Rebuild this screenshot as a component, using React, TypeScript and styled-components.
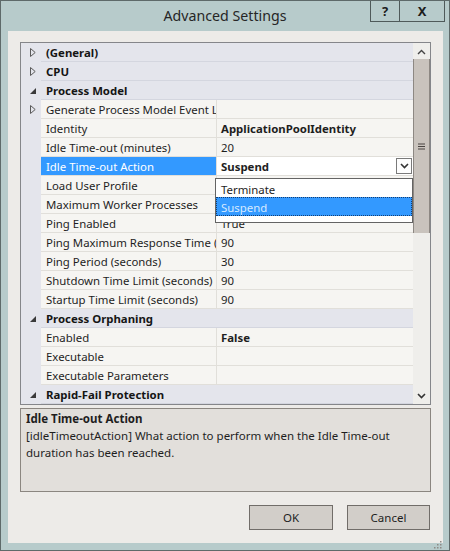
import React from "react";
import styled, { createGlobalStyle } from "styled-components";

const FONT = `"Noto Sans", "Open Sans", sans-serif`;

const GlobalStyle = createGlobalStyle`
  html, body { margin: 0; padding: 0; background: #b7cbcb; }
  body { font-family: ${FONT}; }
  * { box-sizing: border-box; }
`;

const Window = styled.div`
  width: 450px;
  height: 551px;
  border: 1px solid #5e6a6a;
  background: #b7cbcb;
  display: flex;
  flex-direction: column;
  font-family: ${FONT};
  color: #1e1e1e;
`;

const TitleBar = styled.div`
  height: 30px;
  flex: none;
  display: grid;
  grid-template-columns: 1fr auto 1fr;
`;

const Title = styled.div`
  grid-column: 2;
  font-size: 14.2px;
  line-height: 30px;
  color: #262626;
`;

const CaptionButtons = styled.div`
  grid-column: 3;
  justify-self: end;
  align-self: start;
  display: flex;
  margin-right: 4px;
`;

const CaptionButton = styled.div<{ $w: number }>`
  width: ${(p) => p.$w}px;
  height: 21px;
  border: 1px solid #4f5a5a;
  border-top: none;
  margin-left: -1px;
  display: flex;
  align-items: center;
  justify-content: center;
  font-weight: 700;
  font-size: 13px;
  color: #1c1c1c;
`;

const Client = styled.div`
  flex: 1;
  margin: 0 6px 7px 7px;
  background: #edebe8;
  display: flex;
  flex-direction: column;
  padding: 11px 12px 0 12px;
  position: relative;
`;

const Grid = styled.div`
  height: 363px;
  flex: none;
  border: 1px solid #85868a;
  display: flex;
  background: #f6f5f2;
`;

const Rows = styled.div`
  flex: 1;
  position: relative;
  display: flex;
  flex-direction: column;
  font-size: 11.4px;
`;

const Row = styled.div`
  display: grid;
  grid-template-columns: 20px 176px 1fr;
  height: 19px;
  flex: none;
`;

const Gutter = styled.div`
  background: #e4e5ec;
  display: flex;
  align-items: center;
  padding-left: 9px;
`;

const CatLabel = styled.div`
  grid-column: span 2;
  background: #e4e5ec;
  border-bottom: 1px solid #d4d6df;
  font-weight: 700;
  padding: 2px 0 0 5px;
  line-height: 16px;
  color: #151515;
`;

const NameCell = styled.div<{ $selected?: boolean }>`
  border-bottom: 1px solid #e1dfda;
  border-right: 1px solid #e1dfda;
  padding: 2px 0 0 5px;
  line-height: 16px;
  white-space: nowrap;
  overflow: hidden;
  background: ${(p) => (p.$selected ? "#3399ff" : "transparent")};
  color: ${(p) => (p.$selected ? "#ffffff" : "#1e1e1e")};
`;

const ValueCell = styled.div<{ $bold?: boolean; $editing?: boolean }>`
  border-bottom: 1px solid #e1dfda;
  padding-left: 4px;
  white-space: nowrap;
  overflow: hidden;
  font-weight: ${(p) => (p.$bold ? 700 : 400)};
  background: ${(p) => (p.$editing ? "#ffffff" : "transparent")};
  display: flex;
  align-items: center;
  justify-content: space-between;
`;

const ValueText = styled.span`
  padding-top: 2px;
  line-height: 16px;
`;

const DropButton = styled.div`
  width: 16px;
  height: 16px;
  margin-right: 1px;
  border: 1px solid #7a7a7a;
  background: #fdfdfd;
  display: flex;
  align-items: center;
  justify-content: center;
`;

const Popup = styled.div`
  position: absolute;
  left: 194px;
  top: 135px;
  width: 198px;
  height: 45px;
  border: 1px solid #646464;
  background: #ffffff;
  z-index: 2;
  display: flex;
  flex-direction: column;
`;

const PopupItem = styled.div<{ $active?: boolean }>`
  height: ${(p) => (p.$active ? 19 : 18)}px;
  line-height: 17px;
  padding: 1px 0 0 4px;
  background: ${(p) => (p.$active ? "#3399ff" : "transparent")};
  color: ${(p) => (p.$active ? "#d6eaff" : "#1e1e1e")};
  border: 1px dotted ${(p) => (p.$active ? "#123f75" : "transparent")};
`;

const ScrollBar = styled.div`
  width: 17px;
  flex: none;
  display: flex;
  flex-direction: column;
  background: #efeeeb;
  padding: 1px 0;
`;

const ArrowButton = styled.div`
  height: 15px;
  flex: none;
  display: flex;
  align-items: center;
  justify-content: center;
`;

const Thumb = styled.div`
  height: 174px;
  flex: none;
  background: #c9c3bd;
  border-left: 1px solid #8d8883;
  border-right: 1px solid #8d8883;
  display: flex;
  align-items: center;
  justify-content: center;
`;

const Track = styled.div`
  flex: 1;
`;

const Description = styled.div`
  margin-top: 3px;
  height: 84px;
  flex: none;
  border: 1px solid #8b8680;
  background: #e2dfdb;
  padding: 1px 5px;
  font-size: 11.5px;
  line-height: 17px;
  color: #1e1e1e;
`;

const DescTitle = styled.div`
  font-weight: 700;
`;

const ButtonRow = styled.div`
  display: flex;
  justify-content: flex-end;
  gap: 14px;
  margin-top: 13px;
  padding-right: 1px;
`;

const DialogButton = styled.div<{ $w: number }>`
  width: ${(p) => p.$w}px;
  height: 25px;
  background: #d2cec9;
  border: 1px solid #716d69;
  display: flex;
  align-items: center;
  justify-content: center;
  font-size: 11.5px;
  color: #1e1e1e;
`;

const Grip = styled.div`
  position: absolute;
  right: 1px;
  bottom: 1px;
  width: 10px;
  height: 10px;
`;

type Item =
  | { kind: "cat"; label: string; expanded: boolean }
  | {
      kind: "prop";
      name: string;
      value?: string;
      bold?: boolean;
      expandable?: boolean;
      selected?: boolean;
    };

const items: Item[] = [
  { kind: "cat", label: "(General)", expanded: false },
  { kind: "cat", label: "CPU", expanded: false },
  { kind: "cat", label: "Process Model", expanded: true },
  { kind: "prop", name: "Generate Process Model Event Log Entry", expandable: true },
  { kind: "prop", name: "Identity", value: "ApplicationPoolIdentity", bold: true },
  { kind: "prop", name: "Idle Time-out (minutes)", value: "20" },
  { kind: "prop", name: "Idle Time-out Action", value: "Suspend", bold: true, selected: true },
  { kind: "prop", name: "Load User Profile", value: "True" },
  { kind: "prop", name: "Maximum Worker Processes", value: "1" },
  { kind: "prop", name: "Ping Enabled", value: "True" },
  { kind: "prop", name: "Ping Maximum Response Time (seconds)", value: "90" },
  { kind: "prop", name: "Ping Period (seconds)", value: "30" },
  { kind: "prop", name: "Shutdown Time Limit (seconds)", value: "90" },
  { kind: "prop", name: "Startup Time Limit (seconds)", value: "90" },
  { kind: "cat", label: "Process Orphaning", expanded: true },
  { kind: "prop", name: "Enabled", value: "False", bold: true },
  { kind: "prop", name: "Executable", value: "" },
  { kind: "prop", name: "Executable Parameters", value: "" },
  { kind: "cat", label: "Rapid-Fail Protection", expanded: true },
];

const Collapsed = () => (
  <svg width="6" height="9" viewBox="0 0 6 9">
    <path d="M0.5 0.5 L5.2 4.5 L0.5 8.5 Z" fill="none" stroke="#5a5a5a" strokeWidth="1" />
  </svg>
);

const Expanded = () => (
  <svg width="6" height="6" viewBox="0 0 6 6">
    <path d="M6 0 L6 6 L0 6 Z" fill="#3a3a3a" />
  </svg>
);

const ChevronDown = () => (
  <svg width="9" height="6" viewBox="0 0 9 6">
    <path d="M1 1 L4.5 4.5 L8 1" fill="none" stroke="#333" strokeWidth="1.6" />
  </svg>
);

const ChevronUp = () => (
  <svg width="9" height="6" viewBox="0 0 9 6">
    <path d="M1 5 L4.5 1.5 L8 5" fill="none" stroke="#444" strokeWidth="1.4" />
  </svg>
);

const GripLines = () => (
  <svg width="7" height="7" viewBox="0 0 7 7">
    <path d="M0 1 H7 M0 3.5 H7 M0 6 H7" stroke="#4a4542" strokeWidth="1.2" />
  </svg>
);

const ResizeDots = () => (
  <svg width="10" height="10" viewBox="0 0 10 10">
    {[
      [8, 2],
      [8, 5],
      [5, 5],
      [8, 8],
      [5, 8],
      [2, 8],
    ].map(([x, y], i) => (
      <rect key={i} x={x} y={y} width="1.5" height="1.5" fill="#8d8a86" />
    ))}
  </svg>
);

export default function App() {
  return (
    <>
      <GlobalStyle />
      <Window>
        <TitleBar>
          <Title>Advanced Settings</Title>
          <CaptionButtons>
            <CaptionButton $w={30}>?</CaptionButton>
            <CaptionButton $w={46}>X</CaptionButton>
          </CaptionButtons>
        </TitleBar>
        <Client>
          <Grid>
            <Rows>
              {items.map((it, i) =>
                it.kind === "cat" ? (
                  <Row key={i}>
                    <Gutter>{it.expanded ? <Expanded /> : <Collapsed />}</Gutter>
                    <CatLabel>{it.label}</CatLabel>
                  </Row>
                ) : (
                  <Row key={i}>
                    <Gutter>{it.expandable ? <Collapsed /> : null}</Gutter>
                    <NameCell $selected={it.selected}>{it.name}</NameCell>
                    <ValueCell $bold={it.bold} $editing={it.selected}>
                      <ValueText>{it.value}</ValueText>
                      {it.selected && (
                        <DropButton>
                          <ChevronDown />
                        </DropButton>
                      )}
                    </ValueCell>
                  </Row>
                )
              )}
              <Popup>
                <PopupItem>Terminate</PopupItem>
                <PopupItem $active>Suspend</PopupItem>
              </Popup>
            </Rows>
            <ScrollBar>
              <ArrowButton>
                <ChevronUp />
              </ArrowButton>
              <Thumb>
                <GripLines />
              </Thumb>
              <Track />
              <ArrowButton>
                <ChevronDown />
              </ArrowButton>
            </ScrollBar>
          </Grid>
          <Description>
            <DescTitle>Idle Time-out Action</DescTitle>
            <div>
              [idleTimeoutAction] What action to perform when the Idle Time-out
              duration has been reached.
            </div>
          </Description>
          <ButtonRow>
            <DialogButton $w={84}>OK</DialogButton>
            <DialogButton $w={83}>Cancel</DialogButton>
          </ButtonRow>
          <Grip>
            <ResizeDots />
          </Grip>
        </Client>
      </Window>
    </>
  );
}
